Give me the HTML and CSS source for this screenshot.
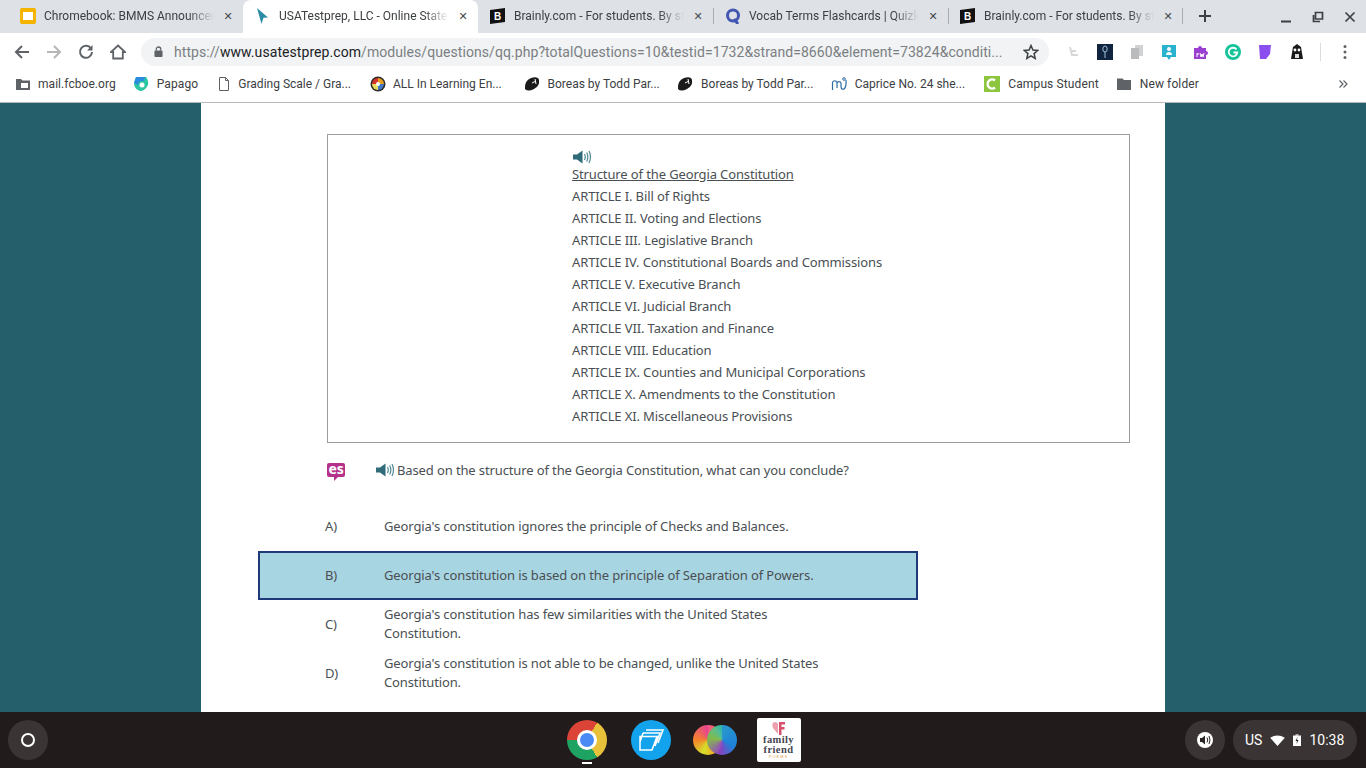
FILE: index.html
```html
<!DOCTYPE html>
<html lang="en">
<head>
<meta charset="utf-8">
<title>USATestprep</title>
<link rel="stylesheet" href="styles.css">
</head>
<body>
<div class="tabstrip">
  <div class="tab t1">
    <svg class="fav" viewBox="0 0 16 16"><rect x="0" y="0" width="16" height="16" rx="2" fill="#f4b400"/><rect x="3" y="4" width="10" height="8" fill="#fff"/></svg>
    <span class="tab-title">Chromebook: BMMS Announcements</span><span class="tab-x">✕</span>
  </div>
  <div class="tab active t2">
    <svg class="fav" viewBox="0 0 16 16"><path d="M2 0 L13 9.5 L8.5 9.8 L6.5 16 Z" fill="#2a8ca5"/></svg>
    <span class="tab-title">USATestprep, LLC - Online State-Aligned</span><span class="tab-x">✕</span>
  </div>
  <div class="tab sep t3">
    <svg class="fav" viewBox="0 0 16 16"><path d="M0 2 L15 0 V14 L0 16 Z" fill="#111"/><text x="4" y="12" font-size="10" font-weight="700" fill="#fff" font-family="Liberation Sans">B</text></svg>
    <span class="tab-title">Brainly.com - For students. By students.</span><span class="tab-x">✕</span>
  </div>
  <div class="tab sep t4">
    <svg class="fav" viewBox="0 0 16 16"><circle cx="8" cy="7.5" r="5.5" fill="none" stroke="#4257b2" stroke-width="3"/><path d="M9 11 L13 16" stroke="#4257b2" stroke-width="3"/></svg>
    <span class="tab-title">Vocab Terms Flashcards | Quizlet</span><span class="tab-x">✕</span>
  </div>
  <div class="tab sep t5">
    <svg class="fav" viewBox="0 0 16 16"><path d="M0 2 L15 0 V14 L0 16 Z" fill="#111"/><text x="4" y="12" font-size="10" font-weight="700" fill="#fff" font-family="Liberation Sans">B</text></svg>
    <span class="tab-title">Brainly.com - For students. By students.</span><span class="tab-x">✕</span>
  </div>
  <svg class="newtab" viewBox="0 0 14 14"><path d="M7 1 V13 M1 7 H13" stroke="#3c4043" stroke-width="2"/></svg>
  <div class="winctl">
    <svg viewBox="0 0 12 12"><path d="M1 10.5 H11" stroke="#3c4043" stroke-width="2"/></svg>
    <svg viewBox="0 0 12 12"><path d="M3.5 1.5 H10.5 V8 H3.5 Z M1.5 4 V10.5 H8" fill="none" stroke="#3c4043" stroke-width="1.7"/></svg>
    <svg viewBox="0 0 12 12"><path d="M1.5 1.5 L10.5 10.5 M10.5 1.5 L1.5 10.5" stroke="#3c4043" stroke-width="1.7"/></svg>
  </div>
</div>

<div class="toolbar">
  <svg class="tb" viewBox="0 0 16 16"><path d="M15 8 H2 M8 2 L2 8 L8 14" fill="none" stroke="#5f6368" stroke-width="2"/></svg>
  <svg class="tb" viewBox="0 0 16 16"><path d="M1 8 H14 M8 2 L14 8 L8 14" fill="none" stroke="#b4b6b8" stroke-width="2"/></svg>
  <svg class="tb" viewBox="0 0 16 16"><path d="M13 4.5 A6 6 0 1 0 14 8" fill="none" stroke="#5f6368" stroke-width="2"/><path d="M14.5 1 V6.5 H9 Z" fill="#5f6368"/></svg>
  <svg class="tb" viewBox="0 0 16 16"><path d="M8 1.5 L15 8 H12.8 V14.5 H3.2 V8 H1 Z" fill="none" stroke="#5f6368" stroke-width="1.8"/></svg>
  <div class="omnibox">
    <svg class="lock" viewBox="0 0 10 12"><rect x="0.5" y="5" width="9" height="7" rx="1" fill="#5f6368"/><path d="M2.5 5 V3.5 A2.5 2.5 0 0 1 7.5 3.5 V5" fill="none" stroke="#5f6368" stroke-width="1.4"/></svg>
    <span class="url">https://<b>www.usatestprep.com</b>/modules/questions/qq.php?totalQuestions=10&amp;testid=1732&amp;strand=8660&amp;element=73824&amp;conditi...</span>
    <svg class="star" viewBox="0 0 16 16"><path d="M8 1.5 L9.9 6 L14.8 6.4 L11.1 9.6 L12.2 14.4 L8 11.9 L3.8 14.4 L4.9 9.6 L1.2 6.4 L6.1 6 Z" fill="none" stroke="#3c4043" stroke-width="1.5"/></svg>
  </div>
  <div class="exts">
    <svg viewBox="0 0 16 16"><path d="M5 3 L7 11 H13 M7 7 H11" fill="none" stroke="#d5d7d9" stroke-width="2"/></svg>
    <svg viewBox="0 0 16 16"><rect width="16" height="16" fill="#10233f"/><ellipse cx="8" cy="5" rx="2.2" ry="3" fill="none" stroke="#9fc3dc" stroke-width="1"/><path d="M8 8 V14" stroke="#9fc3dc"/></svg>
    <svg viewBox="0 0 16 16"><rect x="6" y="1" width="8" height="11" fill="#d0d2d4"/><rect x="2" y="4" width="8" height="11" fill="#b9bbbd"/></svg>
    <svg viewBox="0 0 16 16"><path d="M1 1 H15 V13 H10 L8 16 L6 13 H1 Z" fill="#29b3cf"/><circle cx="8" cy="5" r="2" fill="#fff"/><path d="M5 11 A3 3 0 0 1 11 11 Z" fill="#fff"/></svg>
    <svg viewBox="0 0 16 16"><path d="M1 4 H5 A2 2 0 0 1 9 4 H13 V7 A2 2 0 0 1 13 11 V15 H1 Z" fill="#9b3fd0"/><path d="M4 9 V13 M4 10 H6 M7 9 L8 13 L9 10 L10 13 L11 9" fill="none" stroke="#fff"/></svg>
    <svg viewBox="0 0 16 16"><circle cx="8" cy="8" r="8" fill="#15c39a"/><path d="M11.5 5.5 A4.3 4.3 0 1 0 12.3 8.5 H8.5" fill="none" stroke="#fff" stroke-width="1.8"/></svg>
    <svg viewBox="0 0 16 16"><path d="M2 1 H14 L13 10 L9 15 H3 Z" fill="#8b4ff0"/></svg>
    <svg viewBox="0 0 16 16"><path d="M4 3 L8 0 L12 3 L14 15 H2 Z" fill="#1a1a1a"/><circle cx="6" cy="6" r="1.4" fill="#fff"/><circle cx="10" cy="6" r="1.4" fill="#fff"/><rect x="6" y="10" width="4" height="4" fill="#ddd"/></svg>
  </div>
  <span class="tbdiv"></span>
  <svg class="menu" viewBox="0 0 4 16"><circle cx="2" cy="2.5" r="1.5" fill="#5f6368"/><circle cx="2" cy="8" r="1.5" fill="#5f6368"/><circle cx="2" cy="13.5" r="1.5" fill="#5f6368"/></svg>
</div>

<div class="bookmarks">
  <div class="bm b1"><svg viewBox="0 0 16 16"><path d="M1 3 H6 L7.5 4.5 H15 V14 H1 Z" fill="#5f6368"/><rect x="6" y="7" width="7" height="5" fill="#fff"/></svg><span>mail.fcboe.org</span></div>
  <div class="bm b2"><svg viewBox="0 0 16 16"><path d="M3 1 H13 A10 10 0 0 1 15 9 Q12 15 7 15 Q1 13 1 7 Z" fill="#2cc6a2"/><path d="M3 1 H12 L11 5 Q6 4 5 9 L1 7 Z" fill="#2a8be0"/><circle cx="9" cy="9" r="2.5" fill="#fff"/></svg><span>Papago</span></div>
  <div class="bm fixed b3"><svg viewBox="0 0 16 16"><path d="M3.5 1.5 H9.5 L12.5 4.5 V14.5 H3.5 Z M9.5 1.5 V4.5 H12.5" fill="none" stroke="#5f6368"/></svg><span>Grading Scale / Gra...</span></div>
  <div class="bm fixed b4"><svg viewBox="0 0 16 16"><circle cx="8" cy="8" r="7.5" fill="#2c2c2c"/><path d="M8 2 A6 6 0 0 1 14 8 H8 Z" fill="#e8a020"/><path d="M2 8 A6 6 0 0 1 8 2 V8 Z" fill="#d8342c"/><path d="M8 8 H14 A6 6 0 0 1 8 14 Z" fill="#3f78c8"/><path d="M2 8 H8 V14 A6 6 0 0 1 2 8 Z" fill="#e8dd5a"/><circle cx="8" cy="8" r="2" fill="#fff"/></svg><span>ALL In Learning En...</span></div>
  <div class="bm fixed b5"><svg viewBox="0 0 16 16"><path d="M1 13 Q0 5 7 2 Q14 0 15 4 Q16 10 10 13 Q4 16 1 13 Z" fill="#1b1b1b"/><path d="M8 7 L12 5 M11 3 L12 8" stroke="#fff" stroke-width="1"/></svg><span>Boreas by Todd Par...</span></div>
  <div class="bm fixed b6"><svg viewBox="0 0 16 16"><path d="M1 13 Q0 5 7 2 Q14 0 15 4 Q16 10 10 13 Q4 16 1 13 Z" fill="#1b1b1b"/><path d="M8 7 L12 5 M11 3 L12 8" stroke="#fff" stroke-width="1"/></svg><span>Boreas by Todd Par...</span></div>
  <div class="bm fixed b7"><svg viewBox="0 0 16 16"><path d="M1.5 14 V7 A2.2 2.2 0 0 1 6 7 V12 M6 7 A2.2 2.2 0 0 1 10 7 V10 Q10 14 13 13 Q15.5 11 15 4" fill="none" stroke="#2e6da4" stroke-width="1.2"/><circle cx="13" cy="3" r="1.3" fill="none" stroke="#2e6da4"/></svg><span>Caprice No. 24 she...</span></div>
  <div class="bm b8"><svg viewBox="0 0 16 16"><rect width="16" height="16" fill="#8cc63f"/><path d="M11 4.5 A4.5 4.5 0 1 0 11 11.5" fill="none" stroke="#fff" stroke-width="2.4"/></svg><span>Campus Student</span></div>
  <div class="bm b9"><svg viewBox="0 0 16 16"><path d="M1 2.5 H6.5 L8 4 H15 V14 H1 Z" fill="#5f6368"/></svg><span>New folder</span></div>
  <svg class="more" viewBox="0 0 10 10"><path d="M1.5 1.5 L5 5 L1.5 8.5 M5.5 1.5 L9 5 L5.5 8.5" fill="none" stroke="#5f6368" stroke-width="1.2"/></svg>
</div>

<main class="page">
  <div class="sheet">
    <section class="passage">
      <svg class="speaker" viewBox="0 0 19 14"><path d="M0 4.5 H4 L9.5 0.5 V13.5 L4 9.5 H0 Z" fill="#2f6b78"/><path d="M11.5 4 Q13 7 11.5 10 M13.7 2.5 Q16 7 13.7 11.5 M16 1 Q19 7 16 13" fill="none" stroke="#4d8792" stroke-width="1.2"/></svg>
      <p class="heading">Structure of the Georgia Constitution</p>
      <p>ARTICLE I. Bill of Rights</p>
      <p>ARTICLE II. Voting and Elections</p>
      <p>ARTICLE III. Legislative Branch</p>
      <p>ARTICLE IV. Constitutional Boards and Commissions</p>
      <p>ARTICLE V. Executive Branch</p>
      <p>ARTICLE VI. Judicial Branch</p>
      <p>ARTICLE VII. Taxation and Finance</p>
      <p>ARTICLE VIII. Education</p>
      <p>ARTICLE IX. Counties and Municipal Corporations</p>
      <p>ARTICLE X. Amendments to the Constitution</p>
      <p>ARTICLE XI. Miscellaneous Provisions</p>
    </section>
    <div class="question">
      <span class="es">es</span>
      <svg class="speaker" viewBox="0 0 19 14"><path d="M0 4.5 H4 L9.5 0.5 V13.5 L4 9.5 H0 Z" fill="#2f6b78"/><path d="M11.5 4 Q13 7 11.5 10 M13.7 2.5 Q16 7 13.7 11.5 M16 1 Q19 7 16 13" fill="none" stroke="#4d8792" stroke-width="1.2"/></svg>
      <span>Based on the structure of the Georgia Constitution, what can you conclude?</span>
    </div>
    <div class="options">
      <div class="option"><span class="letter">A)</span><span class="answer">Georgia's constitution ignores the principle of Checks and Balances.</span></div>
      <div class="option selected"><span class="letter">B)</span><span class="answer">Georgia's constitution is based on the principle of Separation of Powers.</span></div>
      <div class="option"><span class="letter">C)</span><span class="answer wrap">Georgia's constitution has few similarities with the United States Constitution.</span></div>
      <div class="option"><span class="letter">D)</span><span class="answer wrap">Georgia's constitution is not able to be changed, unlike the United States Constitution.</span></div>
    </div>
  </div>
</main>

<footer class="shelf">
  <div class="launcher"><span class="ring"></span></div>
  <div class="apps">
    <div class="app chrome"><span class="chrome-in"></span><span class="running"></span></div>
    <div class="app nearpod"><svg viewBox="0 0 40 40"><circle cx="20" cy="20" r="20" fill="#12a3ec"/><path d="M15 10 H32 L27 23 M12 13 H29 L24 26 M9 16.5 H26 L21 30 H9 Z M12 13 L9 22" fill="none" stroke="#fff" stroke-width="1.5"/></svg></div>
    <div class="app colors"><span class="c1"></span><span class="c2"></span></div>
    <div class="app ffp">
      <svg viewBox="0 0 16 14"><path d="M7 13 L2 7 Q0 2 3.5 1 Q6 0.5 7 3 Z" fill="#eda0ae"/><path d="M8 14 V1 H14 V3.5 H10.5 V6 H13.5 V8.5 H10.5 V14 Z" fill="#d8506c"/></svg>
      <span class="ff-name">family<br>friend</span>
      <span class="ff-sub">POEMS</span>
    </div>
  </div>
  <div class="status">
    <div class="sound"><svg viewBox="0 0 16 16"><circle cx="8" cy="8" r="8" fill="#fff"/><path d="M3 6 H5 L8 3.5 V12.5 L5 10 H3 Z" fill="#2a2424"/><path d="M10 5.5 Q11.5 8 10 10.5 M12 4 Q14 8 12 12" fill="none" stroke="#2a2424" stroke-width="1"/></svg></div>
    <div class="tray">
      <span>US</span>
      <svg class="wifi" viewBox="0 0 16 12"><path d="M0 3 Q8 -2 16 3 L8 12 Z" fill="#fff"/></svg>
      <svg class="batt" viewBox="0 0 8 12"><rect x="2.5" y="0" width="3" height="2" fill="#aaa"/><rect x="0" y="1.5" width="8" height="10.5" fill="#fff"/><path d="M4.5 3 L2.5 7 H4 L3.5 10 L5.5 6 H4 Z" fill="#222"/></svg>
      <span>10:38</span>
    </div>
  </div>
</footer>
</body>
</html>
```

FILE: styles.css
```css
* { box-sizing: border-box; }
html, body { margin: 0; height: 100%; }
body {
  width: 1366px; height: 768px; overflow: hidden;
  display: flex; flex-direction: column;
  font-family: Roboto, "Liberation Sans", sans-serif;
  background: #fff;
}

/* tab strip */
.tabstrip {
  height: 33px; flex: none;
  background: #dee1e6;
  display: flex; align-items: stretch;
  padding-left: 8px;
}
.tab {
  width: 235px; flex: none;
  display: flex; align-items: center;
  padding: 0 7px 1px 12px;
  font-size: 12px; color: #3c4043;
  position: relative;
}
.tab.active { background: #fff; border-radius: 8px 8px 0 0; color: #3c4043; }
.tab.sep::before {
  content: ""; position: absolute; left: 0; top: 8px; bottom: 9px;
  width: 1px; background: #a9acb0;
}
.t3.sep::before { display: none; }
.t5::after {
  content: ""; position: absolute; right: 0; top: 8px; bottom: 9px;
  width: 1px; background: #a9acb0;
}
.fav { width: 16px; height: 16px; flex: none; margin-right: 8px; }
.tab-title {
  flex: 1; min-width: 0; white-space: nowrap; overflow: hidden;
  -webkit-mask-image: linear-gradient(to right, #000 85%, transparent 100%);
  mask-image: linear-gradient(to right, #000 85%, transparent 100%);
}
.tab-x { width: 16px; margin-left: 6px; font-size: 11px; color: #45494d; text-align: center; font-family: "DejaVu Sans", sans-serif; }
.newtab { width: 14px; height: 14px; align-self: center; margin: 0 0 1px 15px; flex: none; }
.winctl { margin-left: auto; display: flex; align-items: center; gap: 20px; padding-right: 10px; }
.winctl svg { width: 12px; height: 12px; }

/* toolbar */
.toolbar {
  height: 37px; flex: none; background: #fff;
  display: flex; align-items: center;
  padding-left: 14px;
}
.tb { width: 16px; height: 16px; flex: none; margin-right: 16px; }
.omnibox {
  width: 908px; height: 28px; margin-left: -1px; flex: none;
  background: #f1f3f4; border-radius: 14px;
  display: flex; align-items: center;
  padding: 0 10px 0 13px;
}
.lock { width: 9px; height: 11px; flex: none; margin-right: 11px; }
.url { flex: 1; min-width: 0; white-space: nowrap; overflow: hidden; font-size: 14px; color: #7b7f83; letter-spacing: .07px; }
.url b { font-weight: 400; color: #202124; }
.star { width: 16px; height: 16px; flex: none; margin-left: 10px; }
.exts { display: flex; align-items: center; gap: 16px; margin-left: 16px; }
.exts svg { width: 16px; height: 16px; }
.tbdiv { width: 1px; height: 18px; background: #dadce0; margin-left: 15px; }
.menu { width: 4px; height: 16px; margin-left: 22px; }

/* bookmarks */
.bookmarks {
  height: 33px; flex: none; background: #fff;
  border-bottom: 1px solid #b8babc;
  display: flex; align-items: center;
  padding: 0 0 4px 15px;
  font-size: 12px; color: #3c4043;
}
.bm { display: flex; align-items: center; gap: 8px; margin-right: 18px; white-space: nowrap; flex: none; letter-spacing: .12px; }
.bm svg { width: 16px; height: 16px; flex: none; }
.bm.fixed { width: 153.6px; margin-right: 0; letter-spacing: 0; }
.b1 { gap: 7px; margin-right: 17px; letter-spacing: .05px; }
.b2 { gap: 8px; margin-right: 18px; }
.b3 { gap: 6px; }
.b4 { gap: 7px; }
.b8 { margin-right: 17px; }
.more { width: 10px; height: 10px; margin-left: auto; margin-right: 18px; }

/* page */
.page {
  flex: 1; min-height: 0; overflow: hidden;
  background: #255f6c;
  display: flex; justify-content: center;
}
.sheet {
  width: 964px; background: #fff;
  padding: 31px 0 0 126px;
  font-family: "Noto Sans", "Open Sans", sans-serif;
  font-size: 13px; letter-spacing: -.12px; color: #4a4f53;
}
.passage {
  width: 803px; height: 309px;
  border: 1px solid #9c9c9c;
  padding: 15px 0 0 244px;
}
.passage .speaker { margin-left: 1px; }
.passage p { margin: 0; height: 22px; line-height: 22px; }
.passage .heading { text-decoration: underline; height: 20px; line-height: 18px; margin-top: 1px; }
.speaker { width: 19px; height: 14px; display: block; }
.question {
  display: flex; align-items: center;
  height: 20px; margin-top: 17px;
}
.question .speaker { margin: 0 2px 0 32px; }
.es {
  width: 18px; height: 14px; background: #b5318c; color: #fff;
  border-radius: 2px; font-weight: 700; font-size: 14px; line-height: 12px;
  text-align: center; flex: none; margin-right: -1px; position: relative;
}
.es::after {
  content: ""; position: absolute; left: 7px; top: 14px;
  border: 2px solid transparent; border-top-color: #b5318c; border-left-color: #b5318c;
}
.options { margin: 22px 0 0 -69px; width: 660px; }
.option {
  height: 49px; display: flex; align-items: center;
  padding-left: 67px; line-height: 19px;
}
.letter { width: 59px; flex: none; }
.answer { width: 450px; }
.wrap { margin-bottom: 2px; }
.selected { background: #a8d5e2; border: 2px solid #1f3a78; padding-left: 65px; }

/* shelf */
.shelf {
  height: 56px; flex: none; background: #211b1b;
  display: grid; grid-template-columns: 1fr auto 1fr; align-items: center;
  padding: 0 9px 0 8px;
}
.launcher {
  width: 40px; height: 40px; border-radius: 50%; background: #3a3534;
  display: flex; align-items: center; justify-content: center;
}
.ring { width: 14px; height: 14px; border: 2px solid #fff; border-radius: 50%; }
.apps { display: flex; gap: 20px; align-items: center; }
.app { width: 44px; height: 44px; display: flex; align-items: center; justify-content: center; position: relative; flex: none; }
.chrome {
  width: 40px; height: 40px; margin: 0 2px; border-radius: 50%;
  background: conic-gradient(from 30deg, #e8c13a 0 120deg, #1ea362 120deg 240deg, #db4437 240deg 360deg);
}
.chrome-in { width: 20px; height: 20px; border-radius: 50%; background: #4a8af4; border: 3px solid #fff; }
.running { position: absolute; left: 15px; bottom: -4px; width: 10px; height: 2px; background: #fff; }
.nearpod svg { width: 40px; height: 40px; }
.colors span { display: block; width: 30px; height: 30px; border-radius: 50%; flex: none; }
.c1 { background: conic-gradient(#f0567f, #f5a623 150deg, #d4e02a 200deg, #f5832a 270deg, #e84393); }
.c2 { margin-left: -16px; background: conic-gradient(#2a9fd8, #1e88e5 120deg, #8e44c9 190deg, #7cc04a 280deg, #36c3b5); opacity: .94; }
.ffp {
  background: #fff; border-radius: 2px;
  flex-direction: column; padding-top: 1px;
  font-family: "Liberation Serif", serif; color: #45454f;
}
.ffp svg { width: 16px; height: 14px; }
.ff-name { font-size: 10.5px; line-height: 9.5px; font-weight: 700; letter-spacing: .4px; text-align: center; }
.ff-sub { font-size: 4px; line-height: 6px; color: #e0a24a; font-family: "Liberation Sans", sans-serif; letter-spacing: 1px; }
.status { justify-self: end; display: flex; align-items: center; gap: 8px; }
.sound {
  width: 40px; height: 40px; border-radius: 50%; background: #3a3534;
  display: flex; align-items: center; justify-content: center;
}
.sound svg { width: 16px; height: 16px; }
.tray {
  height: 40px; width: 124px; border-radius: 20px; background: #3a3534;
  display: flex; align-items: center; padding-left: 12px;
  color: #fff; font-size: 14px;
}
.wifi { width: 15px; height: 11px; margin: 0 8px 0 8px; }
.batt { width: 8px; height: 12px; margin-right: 8px; }
```
